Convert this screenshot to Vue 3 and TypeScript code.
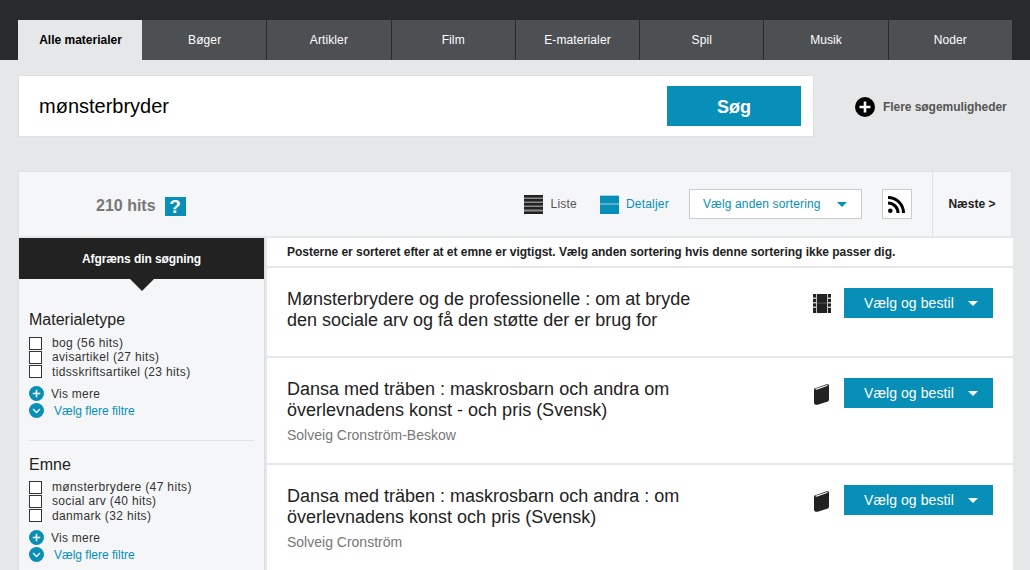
<template>
  <div class="page">
    <nav class="tabs">
      <a v-for="(tab, i) in tabs" :key="tab" class="tab" :class="{ active: i === 0 }">{{ tab }}</a>
    </nav>

    <section class="search-row">
      <div class="search-box">
        <span class="query">mønsterbryder</span>
        <button class="search-btn">Søg</button>
      </div>
      <a class="more-options">
        <svg width="20" height="20" viewBox="0 0 20 20">
          <circle cx="10" cy="10" r="10" fill="#000" />
          <path d="M10 4.5v11M4.5 10h11" stroke="#fff" stroke-width="2.6" />
        </svg>
        <span>Flere søgemuligheder</span>
      </a>
    </section>

    <section class="panel">
      <header class="panel-head">
        <div class="hits">
          <span>210 hits</span>
          <span class="help">?</span>
        </div>
        <div class="view-opt">
          <svg width="19" height="19" viewBox="0 0 19 19">
            <path d="M0 0h19v19H0z" fill="#8a8a8a" />
            <path d="M0 0h19v2.500H0zM0 4h19v2.500H0zM0 8h19v2.500H0zM0 12h19v2.500H0zM0 16.500h19V19H0z" fill="#222" />
          </svg>
          <span>Liste</span>
        </div>
        <div class="view-opt selected">
          <svg width="19" height="19" viewBox="0 0 19 19">
            <path d="M0 0h19v19H0z" fill="#078fb7" />
            <path d="M0 0h19v1H0zM0 8.500h19v1H0z" fill="#a4d3e2" />
          </svg>
          <span>Detaljer</span>
        </div>
        <div class="sort">
          <span>Vælg anden sortering</span>
          <i class="caret blue"></i>
        </div>
        <div class="rss">
          <svg width="17" height="17" viewBox="0 0 17 17" fill="none" stroke="#000" stroke-width="3">
            <circle cx="2.300" cy="14.700" r="2.300" fill="#000" stroke="none" />
            <path d="M0 7a10 10 0 0 1 10 10" />
            <path d="M0 1.500A15.500 15.500 0 0 1 15.500 17" />
          </svg>
        </div>
        <a class="next">Næste &gt;</a>
      </header>

      <div class="body">
        <aside class="sidebar">
          <div class="side-title">Afgræns din søgning</div>
          <div v-for="(group, g) in filters" :key="group.name" class="filter" :class="{ first: g === 0 }">
            <h3>{{ group.name }}</h3>
            <label v-for="opt in group.options" :key="opt" class="check">
              <span class="box"></span>
              <span>{{ opt }}</span>
            </label>
            <div class="link more">
              <svg width="15" height="15" viewBox="0 0 15 15">
                <circle cx="7.5" cy="7.5" r="7.5" fill="#078fb7" />
                <path d="M7.5 3.800v7.400M3.800 7.500h7.400" stroke="#fff" stroke-width="1.6" />
              </svg>
              <span>Vis mere</span>
            </div>
            <div class="link filters-link">
              <svg width="15" height="15" viewBox="0 0 15 15">
                <circle cx="7.5" cy="7.5" r="7.5" fill="#078fb7" />
                <path d="M4 6l3.500 3.500L11 6" stroke="#fff" stroke-width="1.3" fill="none" />
              </svg>
              <span>Vælg flere filtre</span>
            </div>
          </div>
        </aside>

        <main class="results">
          <p class="notice">Posterne er sorteret efter at et emne er vigtigst. Vælg anden sortering hvis denne sortering ikke passer dig.</p>
          <article v-for="item in results" :key="item.title" class="result">
            <div class="info">
              <h2>{{ item.title }}</h2>
              <p v-if="item.author" class="author">{{ item.author }}</p>
            </div>
            <svg v-if="item.kind === 'film'" class="type-icon" width="18" height="19" viewBox="0 0 18 19">
              <path fill="#222" d="M0 0h3v19H0zM4 0h10v19H4zM15 0h3v19h-3z" />
              <path fill="#c4c4c4" d="M0 3.500h3V5H0zM0 8h3v1.500H0zM0 12.500h3V14H0zM15 3.500h3V5h-3zM15 8h3v1.500h-3zM15 12.500h3V14h-3zM3 0h1v19H3zM14 0h1v19h-1z" />
              <path fill="#777" d="M4 8.800h10v.6H4z" />
            </svg>
            <svg v-else class="type-icon book" width="17" height="21" viewBox="0 0 17 21">
              <path fill="#222" d="M1 4.800 13.800.3c1.200-.4 2.200.2 2.200 1.300v14.200c0 .8-.4 1.300-1.100 1.600L4.700 20.700C2.700 21.300 1 20.300 1 18.300z" />
              <path fill="#fff" d="M2 4.900 3.600 5.700 14.800 1.800 14 1z" />
            </svg>
            <button class="order-btn">
              <span>Vælg og bestil</span>
              <i class="caret white"></i>
            </button>
          </article>
        </main>
      </div>
    </section>
  </div>
</template>

<script setup lang="ts">
interface FilterGroup {
  name: string;
  options: string[];
}

interface Result {
  title: string;
  author?: string;
  kind: 'film' | 'book';
}

const tabs = ['Alle materialer', 'Bøger', 'Artikler', 'Film', 'E-materialer', 'Spil', 'Musik', 'Noder'];

const filters: FilterGroup[] = [
  { name: 'Materialetype', options: ['bog (56 hits)', 'avisartikel (27 hits)', 'tidsskriftsartikel (23 hits)'] },
  { name: 'Emne', options: ['mønsterbrydere (47 hits)', 'social arv (40 hits)', 'danmark (32 hits)'] },
];

const results: Result[] = [
  { title: 'Mønsterbrydere og de professionelle : om at bryde den sociale arv og få den støtte der er brug for', kind: 'film' },
  { title: 'Dansa med träben : maskrosbarn och andra om överlevnadens konst - och pris (Svensk)', author: 'Solveig Cronström-Beskow', kind: 'book' },
  { title: 'Dansa med träben : maskrosbarn och andra : om överlevnadens konst och pris (Svensk)', author: 'Solveig Cronström', kind: 'book' },
];
</script>

<style>
html,
body {
  margin: 0;
  background: #e6e7e9;
  overflow: hidden;
}
</style>

<style scoped>
.page {
  height: 570px;
  overflow: hidden;
  font-family: "Liberation Sans", Arial, sans-serif;
  color: #222;
}

/* tabs */
.tabs {
  display: flex;
  height: 40px;
  padding: 20px 18px 0;
  background: #272b2e;
}

.tab {
  flex: 1;
  display: flex;
  align-items: center;
  justify-content: center;
  font-size: 12px;
  letter-spacing: 0.1px;
  color: #fff;
  background: #4d5053;
  border-left: 1px solid #272b2e;
}

.tab.active {
  flex: none;
  width: 124px;
  padding-left: 1px;
  box-sizing: border-box;
  background: #e6e7e9;
  color: #000;
  font-weight: bold;
  letter-spacing: 0;
  border-left: 0;
}

.tab:nth-child(2) {
  border-left: 0;
  padding-left: 1px;
}

/* search */
.search-row {
  display: flex;
  align-items: center;
  padding: 15px 0 0 18px;
}

.search-box {
  box-sizing: border-box;
  width: 796px;
  height: 62px;
  display: flex;
  align-items: center;
  justify-content: space-between;
  padding: 0 12px 0 20px;
  background: #fff;
  border: 1px solid #e0e1e4;
}

.query {
  font-size: 20px;
  color: #000;
}

.search-btn {
  width: 134px;
  height: 40px;
  padding-top: 3px;
  border: 0;
  background: #078fb7;
  color: #fff;
  font: bold 18px "Liberation Sans", Arial, sans-serif;
}

.more-options {
  display: flex;
  align-items: center;
  gap: 8px;
  margin-left: 41px;
  margin-top: 2px;
  font-size: 12px;
  font-weight: bold;
  letter-spacing: -0.05px;
  color: #555;
}

/* panel */
.panel {
  box-sizing: border-box;
  width: 994px;
  margin: 34px 0 0 18px;
  border: 1px solid #e0e1e4;
  border-bottom: 0;
  background: #e6e7e9;
}

.panel-head {
  height: 64px;
  display: flex;
  align-items: center;
  background: #f5f6f8;
  font-size: 12px;
}

.hits {
  display: flex;
  align-items: center;
  gap: 9px;
  margin-left: 77px;
  margin-top: 4px;
  font-size: 16px;
  font-weight: bold;
  color: #777;
}

.help {
  width: 21px;
  height: 19px;
  background: #078fb7;
  color: #fff;
  font-size: 19px;
  line-height: 19px;
  text-align: center;
}

.view-opt {
  display: flex;
  align-items: center;
  gap: 8px;
  letter-spacing: 0.2px;
  color: #555;
}

.view-opt:nth-child(2) {
  margin-left: 338px;
}

.view-opt.selected {
  margin-left: 23px;
  gap: 7px;
  color: #078fb7;
}

.sort {
  box-sizing: border-box;
  width: 173px;
  height: 30px;
  margin-left: 20px;
  padding: 0 14px 0 13px;
  display: flex;
  align-items: center;
  justify-content: space-between;
  background: #fff;
  border: 1px solid #c9cbce;
  letter-spacing: 0.15px;
  color: #078fb7;
}

.caret {
  width: 0;
  height: 0;
  border-left: 5px solid transparent;
  border-right: 5px solid transparent;
  border-top: 5px solid #078fb7;
}

.caret.white {
  border-top-color: #fff;
}

.rss {
  box-sizing: border-box;
  width: 30px;
  height: 30px;
  margin-left: 20px;
  display: flex;
  align-items: center;
  justify-content: center;
  background: #fff;
  border: 1px solid #c9cbce;
}

.next {
  height: 64px;
  flex: 1;
  margin-left: 20px;
  display: flex;
  align-items: center;
  justify-content: center;
  border-left: 1px solid #e0e1e4;
  font-weight: bold;
  color: #222;
}

/* body */
.body {
  display: flex;
  gap: 2px;
  margin-top: 2px;
}

.sidebar {
  width: 245px;
  flex: none;
  height: 340px;
  background: #f5f6f8;
  border-right: 1px solid #dcdde0;
}

.side-title {
  position: relative;
  height: 41px;
  line-height: 43px;
  text-align: center;
  background: #222;
  color: #fff;
  font-size: 12px;
  letter-spacing: -0.08px;
  font-weight: bold;
}

.side-title::after {
  content: "";
  position: absolute;
  left: 111px;
  top: 41px;
  border-left: 12px solid transparent;
  border-right: 12px solid transparent;
  border-top: 12px solid #222;
}

.filter {
  margin: 0 10px;
  padding: 14px 0 20px;
  border-top: 1px solid #e0e1e4;
}

.filter.first {
  padding-top: 31px;
  border-top: 0;
}

.filter h3 {
  margin: 0 0 5px;
  font-size: 16px;
  line-height: 20px;
  font-weight: normal;
  color: #222;
}

.filter.first h3 {
  margin-bottom: 6px;
}

.check {
  display: flex;
  align-items: center;
  gap: 10px;
  height: 14.3px;
  font-size: 12px;
  letter-spacing: 0.35px;
  color: #333;
}

.box {
  box-sizing: border-box;
  width: 13px;
  height: 13px;
  border: 1px solid #333;
  background: #fff;
}

.link {
  display: flex;
  align-items: center;
  font-size: 12px;
  height: 18px;
}

.more {
  gap: 7px;
  height: 16px;
  margin-top: 7px;
  letter-spacing: 0.25px;
  color: #333;
}

.filters-link {
  gap: 10px;
  color: #078fb7;
}

.results {
  flex: 1;
  min-width: 0;
  margin-right: -2px;
}

.notice {
  margin: 0 0 2px;
  height: 28px;
  padding-left: 20px;
  line-height: 28px;
  background: #fff;
  font-size: 12px;
  font-weight: bold;
  letter-spacing: -0.03px;
  color: #222;
}

.result {
  position: relative;
  display: flex;
  align-items: flex-start;
  margin-bottom: 2px;
  padding: 21px 20px 25px 20px;
  background: #fff;
}

.info {
  width: 406px;
  margin-right: 120px;
}

.info h2 {
  margin: 0;
  font-size: 18px;
  line-height: 21px;
  font-weight: normal;
  color: #222;
}

.author {
  margin: 5px 0 -6px;
  font-size: 14px;
  line-height: 18px;
  color: #777;
}

.type-icon {
  margin-top: 5px;
}

.order-btn {
  width: 149px;
  height: 30px;
  margin-left: auto;
  margin-top: -1px;
  padding: 0 0 0 20px;
  display: flex;
  align-items: center;
  gap: 14px;
  border: 0;
  background: #078fb7;
  color: #fff;
  font: 14px "Liberation Sans", Arial, sans-serif;
  letter-spacing: 0.08px;
}
</style>
